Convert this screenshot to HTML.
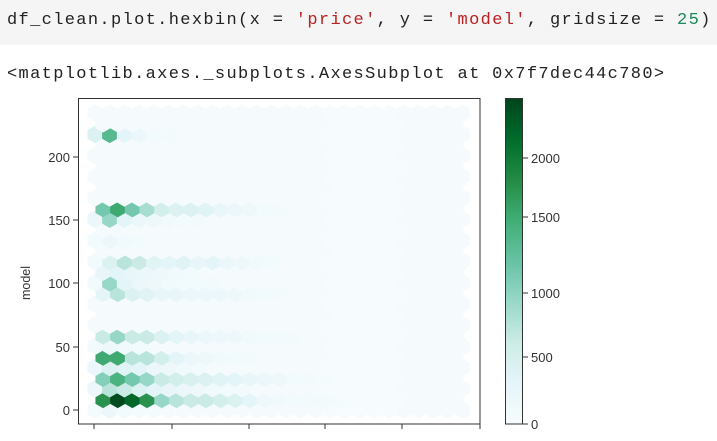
<!DOCTYPE html>
<html><head><meta charset="utf-8"><style>
body{margin:0;width:717px;height:441px;background:#fff;overflow:hidden;position:relative;font-family:"Liberation Sans",sans-serif}
.code{position:absolute;left:0;top:0;width:717px;height:45px;background:#f5f5f5}
.mono{position:absolute;font-family:"Liberation Mono",monospace;font-size:17px;letter-spacing:1.35px;white-space:pre;color:#222}
.s{color:#ba2121}.n{color:#1a8a5a}
</style></head><body>
<div class="code"></div>
<div class="mono" style="left:7px;top:11px">df_clean.plot.hexbin(x = <span class="s">'price'</span>, y = <span class="s">'model'</span>, gridsize = <span class="n">25</span>)</div>
<div class="mono" style="left:7px;top:65px">&lt;matplotlib.axes._subplots.AxesSubplot at 0x7f7dec44c780&gt;</div>
<svg id="g" width="717" height="441" style="position:absolute;left:0;top:0" font-family="Liberation Sans, sans-serif" font-size="13" fill="#333">
<defs><linearGradient id="cb" x1="0" y1="1" x2="0" y2="0">
<stop offset="0" stop-color="#f7fcfd"/><stop offset=".125" stop-color="#e5f5f9"/><stop offset=".25" stop-color="#ccece6"/><stop offset=".375" stop-color="#99d8c9"/><stop offset=".5" stop-color="#66c2a4"/><stop offset=".625" stop-color="#41ae76"/><stop offset=".75" stop-color="#238b45"/><stop offset=".875" stop-color="#006d2c"/><stop offset="1" stop-color="#00441b"/></linearGradient></defs>
<g id="hex"></g>
<rect x="78.5" y="98.5" width="401.5" height="325.5" fill="none" stroke="#333" stroke-width="1"/>
<rect x="505.5" y="98.5" width="17" height="325.5" fill="url(#cb)" stroke="#333" stroke-width="1"/>
<g stroke="#333">
<line x1="94" y1="424" x2="94" y2="429"/><line x1="172" y1="424" x2="172" y2="429"/><line x1="249" y1="424" x2="249" y2="429"/><line x1="325" y1="424" x2="325" y2="429"/><line x1="402" y1="424" x2="402" y2="429"/><line x1="480" y1="424" x2="480" y2="429"/>
<line x1="73" y1="410" x2="78" y2="410"/><line x1="73" y1="347" x2="78" y2="347"/><line x1="73" y1="283" x2="78" y2="283"/><line x1="73" y1="220" x2="78" y2="220"/><line x1="73" y1="157" x2="78" y2="157"/>
<line x1="523" y1="158" x2="528" y2="158"/><line x1="523" y1="217" x2="528" y2="217"/><line x1="523" y1="293" x2="528" y2="293"/><line x1="523" y1="357" x2="528" y2="357"/><line x1="523" y1="424" x2="528" y2="424"/>
</g>
<g text-anchor="end">
<text x="70" y="415">0</text><text x="70" y="352">50</text><text x="70" y="288">100</text><text x="70" y="225">150</text><text x="70" y="162">200</text></g>
<g>
<text x="531" y="163">2000</text><text x="531" y="222">1500</text><text x="531" y="298">1000</text><text x="531" y="362">500</text><text x="531" y="429">0</text></g>
<text transform="translate(30,283) rotate(-90)" text-anchor="middle" font-size="12.5">model</text>
</svg>
<script>
var cm=[[247,252,253],[229,245,249],[204,236,230],[153,216,201],[102,194,164],[65,174,118],[35,139,69],[0,109,44],[0,68,27]];
function col(v){var t=Math.min(1,v/2350)*8,i=Math.min(7,Math.floor(t)),f=t-i,a=cm[i],b=cm[i+1];return 'rgb('+[0,1,2].map(function(j){return Math.round(a[j]+(b[j]-a[j])*f)}).join(',')+')';}
var D={1:[1700,2300,2100,1700,900,700,600,600,500,400,300,150,120,100,80,70,60],
0:[60,200,100,60,50],
2:[200,700,600,400,300,250,200,150,120,100,80],
3:[1000,1400,1100,900,600,500,450,400,350,300,250,200,150,100,80,60],
4:[200,400,350,300,200,150,120,100],
5:[1500,1500,700,700,500,300,200,150,120,100,80],
6:[100,150,120,100],
7:[600,900,600,600,400,300,250,200,180,150,120,100,90,80],
11:[300,700,400,350,250,250,200,200,200,150,120,100,80],
12:[100,900,300,200,150,120,100,100,80],
13:[250,300,250,200,150,120,100],
14:[100,400,700,600,350,300,350,250,300,200,150,120,100],
16:[100,200,120,100],
18:[200,900,300,200,150,120,100,80],
19:[1100,1500,1100,800,500,400,400,350,250,200,150,100,80],
26:[400,1300,300,200,100,70]};
var g=document.getElementById('hex'),h='',r=7.35,s=6.1;
for(var k=0;k<=28;k++){var y=410-k*10.6,odd=k%2,x0=odd?103:95,n=odd?25:26;
for(var i=0;i<n;i++){var x=x0+i*14.7,v=(D[k]&&D[k][i]!==undefined)?D[k][i]:(i>20?25:40-i);
var p=[[x,y-s*1.4],[x+r,y-s*0.7],[x+r,y+s*0.7],[x,y+s*1.4],[x-r,y+s*0.7],[x-r,y-s*0.7]];
h+='<polygon points="'+p.map(function(q){return q[0].toFixed(1)+','+q[1].toFixed(1)}).join(' ')+'" fill="'+col(v)+'" stroke="'+col(v)+'" stroke-width="0.5"/>';}}
g.innerHTML=h;
</script>
</body></html>
